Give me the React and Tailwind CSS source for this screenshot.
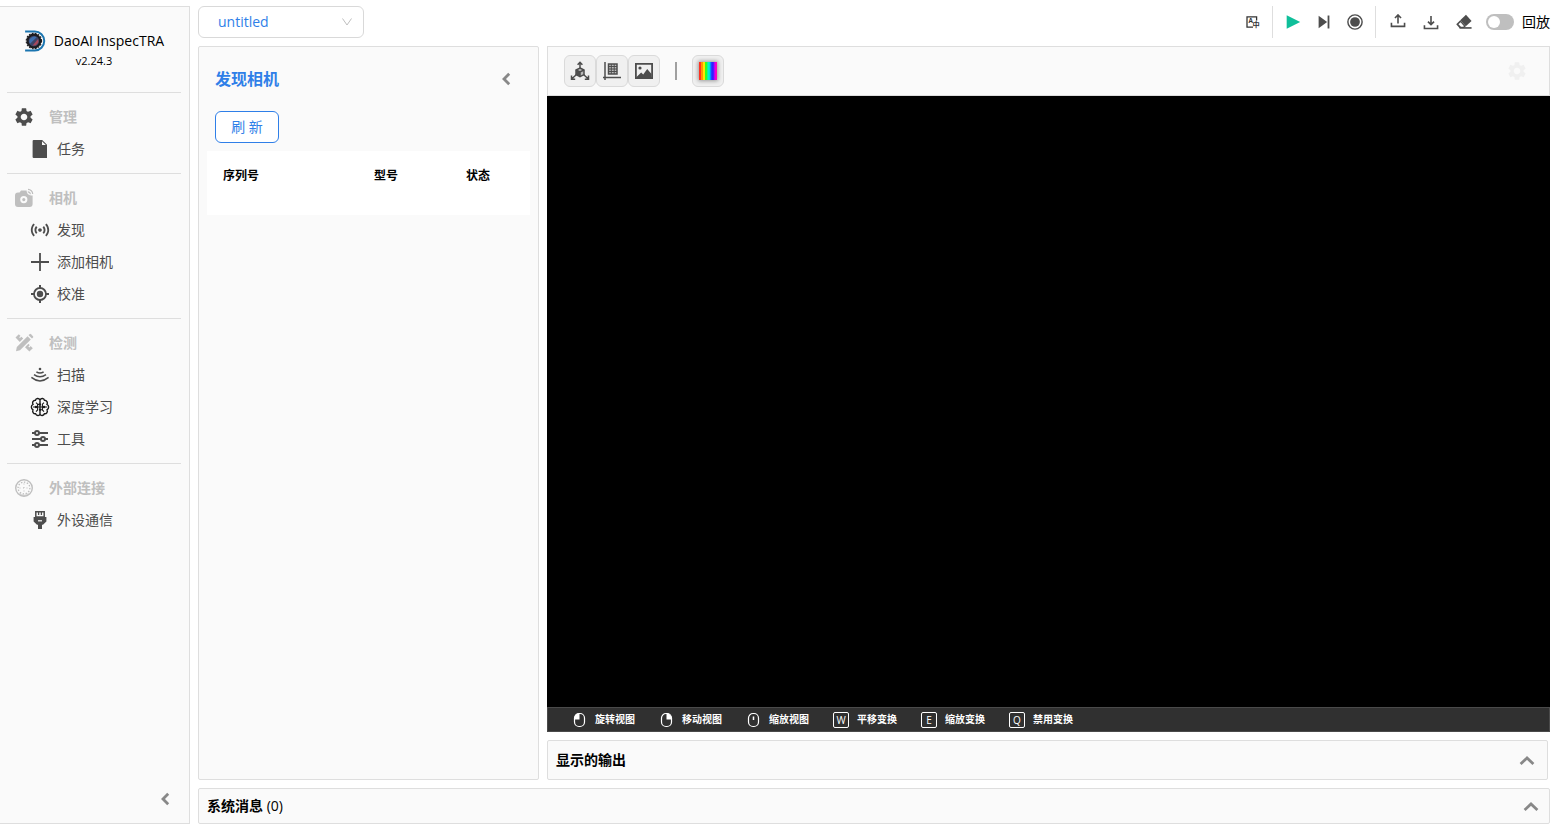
import { useState } from "react";
import { MdSensors, MdSettings } from "react-icons/md";

const Svg = ({ size = 20, children, ...rest }) => (
  <svg
    width={size}
    height={size}
    viewBox="0 0 20 20"
    fill="none"
    stroke="currentColor"
    strokeWidth="1.5"
    aria-hidden="true"
    className="shrink-0"
    {...rest}
  >
    {children}
  </svg>
);

const Logo = () => (
  <Svg size={22}>
    <path d="M1 1.4h8.8a8.6 8.6 0 0 1 0 17.2H1" stroke="#1b75b0" strokeWidth="1.8" />
    <circle cx="9" cy="10" r="5.8" fill="#3d4568" stroke="#1c1c20" strokeWidth="2" />
    <circle cx="9" cy="10" r="7" stroke="#1c1c20" strokeWidth="1" strokeDasharray="1.6 1.2" />
    <path d="M5.5 12.5a4.4 4.4 0 0 1 6-6z" fill="#3f6fae" stroke="none" />
    <path d="M12.8 8.2a4.3 4.3 0 0 1-5 5.8z" fill="#a8485c" stroke="none" />
  </Svg>
);

const FileIcon = () => (
  <Svg>
    <path d="M3.6 1h8.6L17 5.8V19H3.6a1 1 0 0 1-1-1V2a1 1 0 0 1 1-1z" fill="currentColor" stroke="none" />
    <path d="M12 2.2V6h3.8z" fill="#fafafa" stroke="none" />
  </Svg>
);

const CameraIcon = () => (
  <Svg>
    <path
      d="M4 4.500h1.600L7 2.400h5.600c0 3 2 5 6 5V16a3 3 0 0 1-3 3H4a3 3 0 0 1-3-3V7.500a3 3 0 0 1 3-3z"
      fill="currentColor"
      stroke="none"
    />
    <circle cx="9.8" cy="11.6" r="2.6" stroke="#fafafa" strokeWidth="2" />
    <path d="M13.800 3.800a2.500 2.500 0 0 1 2.500 2.500M14 1.400a4.700 4.700 0 0 1 4.700 4.700" strokeWidth="1.200" />
  </Svg>
);

const PlusIcon = () => (
  <Svg>
    <path d="M10 1v18M1 10h18" strokeWidth="1.8" />
  </Svg>
);

const TargetIcon = () => (
  <Svg>
    <circle cx="10" cy="10" r="6" strokeWidth="1.8" />
    <circle cx="10" cy="10" r="3.2" fill="currentColor" stroke="none" />
    <path d="M10 1v3.500M10 15.500V19M1 10h3.500M15.500 10H19" strokeWidth="2" />
  </Svg>
);

const PencilRulerIcon = () => (
  <Svg>
    <g fill="currentColor" stroke="none">
      <path d="M13.600 3.200 16.800 6.400 6 17.300 2 18.200l.8-4.200z" />
      <path d="m14.600 2.200 1-1a1 1 0 0 1 1.400 0l2 2a1 1 0 0 1 0 1.400l-1 1z" />
      <path d="M1.500 4.600 4.800 1.300l4.400 4.300-3.400 3.400z" />
      <path d="m14.400 10.800 4.400 4.400-3.400 3.400-4.400-4.400z" />
    </g>
    <path d="m7.600 2.600-2 2M16.800 12l-2 2" stroke="#fafafa" strokeWidth="1.200" />
  </Svg>
);

const ScanIcon = () => (
  <Svg>
    <circle cx="10" cy="4" r="1.300" fill="currentColor" stroke="none" />
    <path d="M6.400 6.800q3.600 2.400 7.200 0M4 9.600q6 4.200 12 0M1.400 12.400q8.600 7 17.200 0" strokeWidth="1.500" />
  </Svg>
);

const BrainIcon = () => (
  <Svg stroke="#1a1a1a" strokeWidth="1.400">
    <path d="M10 2.800C8.800.8 6 1.200 5.400 3.200 3 3.200 1.900 5.600 3 7.400.8 8.600.8 11.600 3 12.800c-1 2 .4 4.200 2.600 4 .8 2 3.600 2.400 4.400.4 1 2 3.800 1.600 4.400-.4 2.400.2 3.600-2 2.600-4 2.200-1.200 2.200-4.200 0-5.400 1-1.800-.2-4.200-2.600-4.200C14 1.200 11.200.8 10 2.800zM10 3v14.400" />
    <path d="M3 10h14M6 5.600l1.600 1.600V13L6 14.600M14 5.600l-1.600 1.600V13l1.600 1.600M7.600 7.400H10M10 12.800h2.400" strokeWidth="1.100" />
    <g fill="#1a1a1a" stroke="none">
      <circle cx="6" cy="10" r="1.300" />
      <circle cx="14" cy="10" r="1.300" />
      <circle cx="10" cy="7.400" r="1.100" />
      <circle cx="10" cy="12.800" r="1.100" />
    </g>
  </Svg>
);

const SlidersIcon = () => (
  <Svg strokeWidth="2">
    <path d="M2 4h3M9 4h9M2 10h9M15 10h3M2 16h3M9 16h9" />
    <circle cx="7" cy="4" r="2" />
    <circle cx="13" cy="10" r="2" />
    <circle cx="7" cy="16" r="2" />
  </Svg>
);

const GlobeIcon = () => (
  <Svg strokeWidth="1.400">
    <circle cx="10" cy="10" r="8.300" />
    <circle cx="10" cy="10" r="5.900" strokeDasharray="1.400 1.600" />
    <path d="M10 5.500v9M5.500 10h9" strokeWidth="1" strokeDasharray="1 2.500" />
    <path d="M5.800 15a6.500 6.500 0 0 0 8.400 0l1 1.200a8 8 0 0 1-10.400 0z" fill="currentColor" stroke="none" opacity=".6" />
  </Svg>
);

const PlugIcon = () => (
  <Svg>
    <path d="M5.800 1.700h8.400V7H5.800z" strokeWidth="1.500" />
    <path d="M8.600 2v3M11.400 2v3" strokeWidth="1.300" />
    <path d="M3.600 7h12.800v4.600L13 14.800h-1V19H8v-4.200H7l-3.400-3.200z" fill="currentColor" stroke="none" />
    <path d="M8 10.800h4" stroke="#fafafa" strokeWidth="1.200" />
  </Svg>
);

const LanguageIcon = () => (
  <Svg size={16}>
    <path d="M14.500 8V3.500h-12v13H10" stroke="#333" strokeWidth="1.600" />
    <g fill="#333" stroke="none" fontWeight="bold">
      <text x="4.500" y="11.500" fontSize="8">A</text>
      <text x="9.500" y="16" fontSize="9">中</text>
    </g>
  </Svg>
);

const PlayIcon = () => (
  <Svg size={18}>
    <path d="M3 2.500 18 10 3 17.500z" fill="#0fbf9a" stroke="none" />
  </Svg>
);

const StepIcon = () => (
  <Svg size={18}>
    <path d="M4 3l9.500 7L4 17z" fill="currentColor" stroke="none" />
    <path d="M15 2.800v14.400" strokeWidth="2" />
  </Svg>
);

const RecordIcon = () => (
  <Svg size={18}>
    <circle cx="10" cy="10" r="7.900" strokeWidth="1.600" />
    <circle cx="10" cy="10" r="5.400" fill="currentColor" stroke="none" />
  </Svg>
);

const UploadIcon = () => (
  <Svg size={16} strokeWidth="2">
    <path d="M10 12V1.500M6.200 5 10 1.200 13.800 5M1.800 11v4.500h16.400V11" />
  </Svg>
);

const DownloadIcon = () => (
  <Svg size={16} strokeWidth="2">
    <path d="M10 2.500v10.500M6.200 9.500l3.800 3.800 3.800-3.800M1.800 14v4.200h16.400V14" />
  </Svg>
);

const EraserIcon = () => (
  <Svg size={18}>
    <path d="M12.200 2 18.400 8.800 12 14.600 5.800 8z" fill="currentColor" stroke="none" />
    <path d="M5.800 8 12 14.600l-2.200 2.200H5L1.400 12.500z" fill="currentColor" stroke="none" />
    <path d="m6.200 10.400 3.800 4.200-1 .8H6.600l-2.800-3z" fill="#fff" stroke="none" />
    <path d="M5 16.600h13.400" strokeWidth="1.800" />
  </Svg>
);

const CubeAxesIcon = () => (
  <Svg strokeWidth="1.500">
    <path d="M10 7V1.500M7.600 3.800 10 1.400l2.400 2.400M6.500 13.500 1.600 18M1.500 14.600V18.200H5.200M13.500 13.500l4.900 4.500M18.500 14.600v3.600h-3.700" />
    <path d="m10 7 4 2v4.600l-4 2-4-2V9z" fill="#bbb" />
    <path d="m6 9 4 2 4-2M10 11v4.600" />
    <path d="m10 11-4-2v4.600l4 2z" fill="currentColor" stroke="none" />
  </Svg>
);

const PlaneIcon = () => (
  <Svg strokeWidth="1.500">
    <path d="M3 1v18M1 16.500h18" />
    <path d="M6.500 3H15v10H6.500z" fill="#bbb" />
    <path d="M9.300 3v10M12.200 3v10M6.500 5.500H15M6.500 8H15M6.500 10.500H15" strokeWidth="1" />
  </Svg>
);

const ImageIcon = () => (
  <Svg>
    <path d="M1.900 2.900h16.200v14.200H1.900z" strokeWidth="1.800" />
    <path d="m2.500 16 4.700-4.500 2 2 4-5.500 4.300 5v4h-15z" fill="currentColor" stroke="none" />
    <circle cx="6" cy="7" r="1.600" fill="currentColor" stroke="none" />
  </Svg>
);

const MouseIcon = ({ button }) => (
  <svg width="15" height="16" viewBox="0 0 15 16" fill="none" stroke="#fff" aria-hidden="true">
    <rect x="2.500" y="1.500" width="10" height="13" rx="4.500" strokeWidth="1.200" />
    {button === "left" && <path d="M7.500 1.500v6h-5V6A4.500 4.500 0 0 1 7 1.500z" fill="#fff" stroke="none" />}
    {button === "right" && <path d="M7.500 1.500v6h5V6A4.500 4.500 0 0 0 8 1.500z" fill="#fff" stroke="none" />}
    {button === "wheel" && <path d="M7.500 4.500V8" strokeWidth="1.500" />}
  </svg>
);

const Chevron = ({ direction }) => (
  <Svg size={16} strokeWidth="3.500">
    {direction === "left" ? <path d="m14 3.500-6.500 6.500 6.500 6.500" /> : <path d="m2 15 8-7.500L18 15" />}
  </Svg>
);

const SECTIONS = [
  {
    title: "管理",
    icon: <MdSettings size={22} className="text-[#4d4d4d]" />,
    items: [{ label: "任务", icon: <FileIcon /> }],
  },
  {
    title: "相机",
    icon: <CameraIcon />,
    items: [
      { label: "发现", icon: <MdSensors size={22} className="shrink-0" /> },
      { label: "添加相机", icon: <PlusIcon /> },
      { label: "校准", icon: <TargetIcon /> },
    ],
  },
  {
    title: "检测",
    icon: <PencilRulerIcon />,
    items: [
      { label: "扫描", icon: <ScanIcon /> },
      { label: "深度学习", icon: <BrainIcon /> },
      { label: "工具", icon: <SlidersIcon /> },
    ],
  },
  {
    title: "外部连接",
    icon: <GlobeIcon />,
    items: [{ label: "外设通信", icon: <PlugIcon /> }],
  },
];

const HINTS = [
  { label: "旋转视图", mouse: "left" },
  { label: "移动视图", mouse: "right" },
  { label: "缩放视图", mouse: "wheel" },
  { label: "平移变换", keyName: "W" },
  { label: "缩放变换", keyName: "E" },
  { label: "禁用变换", keyName: "Q" },
];

const VIEW_MODES = [
  { label: "三维视图", icon: <CubeAxesIcon /> },
  { label: "平面视图", icon: <PlaneIcon /> },
  { label: "图像视图", icon: <ImageIcon /> },
];

function Sidebar() {
  return (
    <aside className="flex w-[190px] shrink-0 flex-col border-y border-r border-[#dedede] bg-[#fafafa] pl-[7px] pr-2">
      <div className="flex h-[85px] flex-col items-center pt-6">
        <div className="flex h-5 items-center gap-2">
          <Logo />
          <span className="text-sm text-black">DaoAI InspecTRA</span>
        </div>
        <span className="text-[11px] leading-5 text-black">v2.24.3</span>
      </div>
      <nav>
        {SECTIONS.map((section) => (
          <section key={section.title} className="border-t border-[#dedede] py-2">
            <h2 className="flex h-8 items-center text-sm font-bold text-[#bfbfbf]">
              <span className="ml-1.5 mr-3.5 flex w-[22px] justify-center">{section.icon}</span>
              {section.title}
            </h2>
            {section.items.map((item) => (
              <a key={item.label} href="#" className="flex h-8 items-center gap-[7px] pl-[23px] text-sm text-[#4d4d4d]">
                <span className="flex w-5 justify-center">{item.icon}</span>
                {item.label}
              </a>
            ))}
          </section>
        ))}
      </nav>
      <button type="button" aria-label="收起菜单" className="mb-4 mr-2 mt-auto self-end text-[#888]">
        <Chevron direction="left" />
      </button>
    </aside>
  );
}

function ToolButton({ label, wide, children }) {
  return (
    <button
      type="button"
      aria-label={label}
      className={
        wide
          ? "flex h-8 w-[33px] items-center justify-center text-[#4d4d4d]"
          : "flex h-8 w-[31px] items-center justify-center text-[#4d4d4d]"
      }
    >
      {children}
    </button>
  );
}

function TopBar() {
  const [replay, setReplay] = useState(false);

  return (
    <header className="flex h-8 items-center">
      <div className="grid w-[166px] items-center">
        <select
          aria-label="项目"
          className="col-start-1 row-start-1 h-8 appearance-none rounded-md border border-[#d9d9d9] bg-white px-[19px] text-sm text-[#2f7fe8]"
        >
          <option>untitled</option>
        </select>
        <svg
          width="12"
          height="12"
          viewBox="0 0 12 12"
          fill="none"
          stroke="#bfbfbf"
          aria-hidden="true"
          className="pointer-events-none col-start-1 row-start-1 mr-[11px] justify-self-end"
        >
          <path d="M1.500 2.500 6 9l4.500-6.500" />
        </svg>
      </div>

      <div className="ml-auto flex items-center">
        <ToolButton label="语言"><LanguageIcon /></ToolButton>
        <div className="mx-1 h-8 w-px bg-[#dedede]" />
        <ToolButton label="运行"><PlayIcon /></ToolButton>
        <ToolButton label="单步"><StepIcon /></ToolButton>
        <ToolButton label="录制"><RecordIcon /></ToolButton>
        <div className="mx-[5px] h-8 w-px bg-[#dedede]" />
        <ToolButton wide label="导出"><UploadIcon /></ToolButton>
        <ToolButton wide label="导入"><DownloadIcon /></ToolButton>
        <ToolButton wide label="清除"><EraserIcon /></ToolButton>
        <label className="ml-1.5 flex items-center gap-2 text-sm text-black">
          <input
            type="checkbox"
            checked={replay}
            onChange={(e) => setReplay(e.target.checked)}
            className="h-4 w-7 appearance-none rounded-full bg-[#bfbfbf] p-0.5 before:block before:size-3 before:rounded-full before:bg-white checked:bg-[#2f7fe8] checked:before:ml-3"
          />
          回放
        </label>
      </div>
    </header>
  );
}

function CameraPanel() {
  return (
    <section className="w-[341px] shrink-0 rounded-xs border border-[#dedede] bg-[#fafafa] p-2">
      <div className="mt-2 flex h-8 items-center justify-between px-2">
        <h1 className="text-base font-bold text-[#2f7fe8]">发现相机</h1>
        <button type="button" aria-label="收起面板" className="mr-2 text-[#888]">
          <Chevron direction="left" />
        </button>
      </div>
      <button
        type="button"
        className="ml-2 mt-4 block h-8 w-16 rounded-md border border-[#2f7fe8] bg-white text-sm text-[#2f7fe8]"
      >
        刷 新
      </button>
      <div className="mt-2 bg-white pb-3.5">
        <table className="w-full table-fixed text-left text-xs text-black">
          <thead>
            <tr className="h-[50px]">
              <th scope="col" className="w-[151px] px-4 font-bold">序列号</th>
              <th scope="col" className="w-[92px] px-4 font-bold">型号</th>
              <th scope="col" className="px-4 font-bold">状态</th>
            </tr>
          </thead>
          <tbody />
        </table>
      </div>
    </section>
  );
}

function Viewer() {
  return (
    <section className="flex min-h-0 flex-1 flex-col">
      <div className="flex h-[50px] shrink-0 items-center border border-[#dedede] bg-[#fafafa] px-4">
        {VIEW_MODES.map((mode) => (
          <button
            key={mode.label}
            type="button"
            aria-label={mode.label}
            className="flex size-8 items-center justify-center rounded-md border border-[#dadada] bg-[#f0f0f0] text-[#4d4d4d]"
          >
            {mode.icon}
          </button>
        ))}
        <div className="mx-[15px] h-[18px] w-0.5 bg-[#a0a0a0]" />
        <button
          type="button"
          aria-label="颜色映射"
          className="flex size-8 items-center justify-center rounded-md border border-[#dadada] bg-[#f0f0f0]"
        >
          <span className="size-[18px] shadow-[0_0_4px_1px_#999] [background-image:linear-gradient(90deg,#ff3020_0_12%,#ff9500_12%_22%,#ffe600_22%_32%,#30ff20_34%_46%,#00f0d0_48%_58%,#0090ff_60%_68%,#3020ff_70%_80%,#b000ff_82%_90%,#ff00c0_92%)]" />
        </button>
        <button type="button" aria-label="视图设置" disabled className="ml-auto flex size-8 items-center justify-center text-[#f0f0f0]">
          <MdSettings size={22} />
        </button>
      </div>
      <div className="min-h-0 flex-1 bg-black" />
      <ul className="flex h-[25px] shrink-0 items-center gap-6 border border-[#4a4a4a] bg-[#303030] pl-6 text-[10px] font-bold text-white">
        {HINTS.map((hint) => (
          <li key={hint.label} className="flex items-center gap-2">
            {hint.mouse ? (
              <MouseIcon button={hint.mouse} />
            ) : (
              <kbd className="flex size-4 items-center justify-center rounded-xs border border-white font-[inherit] font-medium leading-none">
                {hint.keyName}
              </kbd>
            )}
            {hint.label}
          </li>
        ))}
      </ul>
    </section>
  );
}

export default function App() {
  return (
    <div className="flex h-screen gap-2 bg-white py-1.5 pr-2.5 font-['Open_Sans','Noto_Sans_CJK_SC',sans-serif]">
      <Sidebar />
      <main className="flex min-w-0 flex-1 flex-col gap-2">
        <TopBar />
        <div className="flex min-h-0 flex-1 gap-2">
          <CameraPanel />
          <div className="flex min-w-0 flex-1 flex-col gap-2">
            <Viewer />
            <section className="mr-0.5 flex h-10 shrink-0 items-center justify-between rounded-xs border border-[#dedede] bg-[#fafafa] pl-2 pr-3">
              <h2 className="text-sm font-bold text-black">显示的输出</h2>
              <button type="button" aria-label="展开输出" className="text-[#888]">
                <Chevron direction="up" />
              </button>
            </section>
          </div>
        </div>
        <section className="flex h-9 shrink-0 items-center justify-between rounded-xs border border-[#dedede] bg-[#fafafa] pl-2 pr-2.5">
          <h2 className="text-sm font-medium text-black">
            <span className="font-bold">系统消息</span> (0)
          </h2>
          <button type="button" aria-label="展开消息" className="text-[#888]">
            <Chevron direction="up" />
          </button>
        </section>
      </main>
    </div>
  );
}
